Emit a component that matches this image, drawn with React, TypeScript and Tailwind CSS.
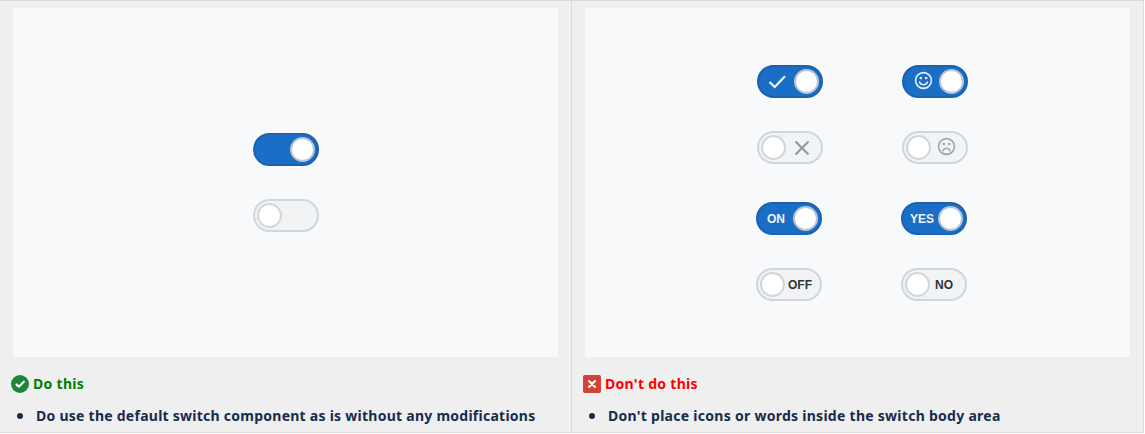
import type { ReactNode } from 'react';

function Switch({ on = false, children }: { on?: boolean; children?: ReactNode }) {
  return (
    <div
      className={
        on
          ? 'flex h-[33px] w-[66px] items-center justify-end rounded-full border-2 border-[#1a62b0] bg-[#1b6ec5] pr-[2px]'
          : 'flex h-[33px] w-[66px] flex-row-reverse items-center justify-end rounded-full border-2 border-[#d0d6dd] bg-[#f1f3f5] pl-[2px]'
      }
    >
      {children && <div className="flex flex-1 items-center">{children}</div>}
      <div
        className={
          on
            ? 'h-[25px] w-[25px] shrink-0 rounded-full border-2 border-[#b9c5d4] bg-white'
            : 'h-[25px] w-[25px] shrink-0 rounded-full border-2 border-[#d0d6dd] bg-white'
        }
      />
    </div>
  );
}

function Face({ sad = false }: { sad?: boolean }) {
  return (
    <svg
      width="19"
      height="19"
      viewBox="0 0 19 19"
      fill="none"
      strokeWidth="1.6"
      strokeLinecap="round"
      className={sad ? 'mb-[3px] ml-[6px] text-[#a0a4aa]' : 'mb-[3px] ml-[10px] text-[#e6effa]'}
      stroke="currentColor"
    >
      <circle cx="9.5" cy="9.5" r="7.9" />
      <circle cx="6.8" cy="7" r="1.3" fill="currentColor" stroke="none" />
      <circle cx="12.2" cy="7" r="1.3" fill="currentColor" stroke="none" />
      <path d={sad ? 'M6 13.6c.7-1.6 2-2.4 3.5-2.4s2.8.8 3.5 2.4' : 'M5.5 11c.8 1.8 2.2 2.8 4 2.8s3.200-1 4-2.8'} />
    </svg>
  );
}

function Label({ className, children }: { className: string; children: ReactNode }) {
  return (
    <span className={`font-['Liberation_Sans',Arial,sans-serif] text-[12px] leading-[14px] font-bold ${className}`}>
      {children}
    </span>
  );
}

function Guideline({ icon, title, titleClass, textClass, text, children }: {
  icon: ReactNode;
  title: string;
  titleClass: string;
  textClass: string;
  text: string;
  children: ReactNode;
}) {
  return (
    <section className="flex h-[432px] w-[572px] flex-col border-r border-[#dadada] pt-[7px]">
      <div className="ml-[13px] h-[349px] w-[545px] bg-[#f8f9fb]">{children}</div>
      <div className="mt-[17px] ml-[11px] flex h-5 items-center gap-[4px]">
        {icon}
        <h2 className={`text-[14px] leading-5 font-bold tracking-[0.3px] whitespace-nowrap ${titleClass}`}>{title}</h2>
      </div>
      <ul className="mt-3 ml-[17px]">
        <li className="flex h-5 items-center">
          <span className="h-[6px] w-[6px] rounded-full bg-[#172b4d]" />
          <span className={`ml-[13px] text-[14px] leading-5 font-bold whitespace-nowrap text-[#172b4d] ${textClass}`}>{text}</span>
        </li>
      </ul>
    </section>
  );
}

export default function App() {
  return (
    <main className="flex h-[433px] w-[1144px] overflow-hidden border-y border-[#dadada] bg-[#efefef] font-['Noto_Sans','Open_Sans',sans-serif]">
      <Guideline
        title="Do this"
        titleClass="text-[#008000]"
        textClass="tracking-[0.255px]"
        text="Do use the default switch component as is without any modifications"
        icon={
          <svg width="18" height="18" viewBox="0 0 18 18" fill="none">
            <circle cx="9" cy="9" r="9" fill="#1f8537" />
            <path d="m5.5 9.500 2.300 2.200 5-5" stroke="#fff" strokeWidth="2.200" strokeLinecap="round" strokeLinejoin="round" />
          </svg>
        }
      >
        <div className="flex flex-col gap-[33px] pt-[125px] pl-[240px]">
          <Switch on />
          <Switch />
        </div>
      </Guideline>
      <Guideline
        title="Don't do this"
        titleClass="text-[#ff0000]"
        textClass="tracking-[0.275px]"
        text="Don't place icons or words inside the switch body area"
        icon={
          <svg width="18" height="18" viewBox="0 0 18 18" fill="none">
            <rect width="18" height="18" rx="2" fill="#d04437" />
            <path d="m6 6 6 6m0-6-6 6" stroke="#fff" strokeWidth="2.100" strokeLinecap="round" />
          </svg>
        }
      >
        <div className="grid grid-cols-[66px_66px] gap-x-[79px] gap-y-[33px] pt-[57px] pl-[172px]">
          <Switch on>
            <svg width="19" height="14" viewBox="0 0 19 14" fill="none" className="ml-[9px]">
              <path d="m1.500 7 5.200 5L17 1.300" stroke="#eef4fb" strokeWidth="2.200" />
            </svg>
          </Switch>
          <Switch on><Face /></Switch>
          <Switch>
            <svg width="16" height="16" viewBox="0 0 16 16" fill="none" className="ml-[8px]">
              <path d="m1.500 1.500 13 13m0-13-13 13" stroke="#959aa2" strokeWidth="2.200" />
            </svg>
          </Switch>
          <Switch><Face sad /></Switch>
        </div>
        <div className="grid grid-cols-[66px_66px] gap-x-[79px] gap-y-[33px] pt-[38px] pl-[171px]">
          <Switch on><Label className="ml-[9px] text-[#eef4fb]">ON</Label></Switch>
          <Switch on><Label className="ml-[7px] text-[#eef4fb]">YES</Label></Switch>
          <Switch><Label className="ml-[3px] text-[#303236]">OFF</Label></Switch>
          <Switch><Label className="ml-[5px] text-[#303236]">NO</Label></Switch>
        </div>
      </Guideline>
    </main>
  );
}
